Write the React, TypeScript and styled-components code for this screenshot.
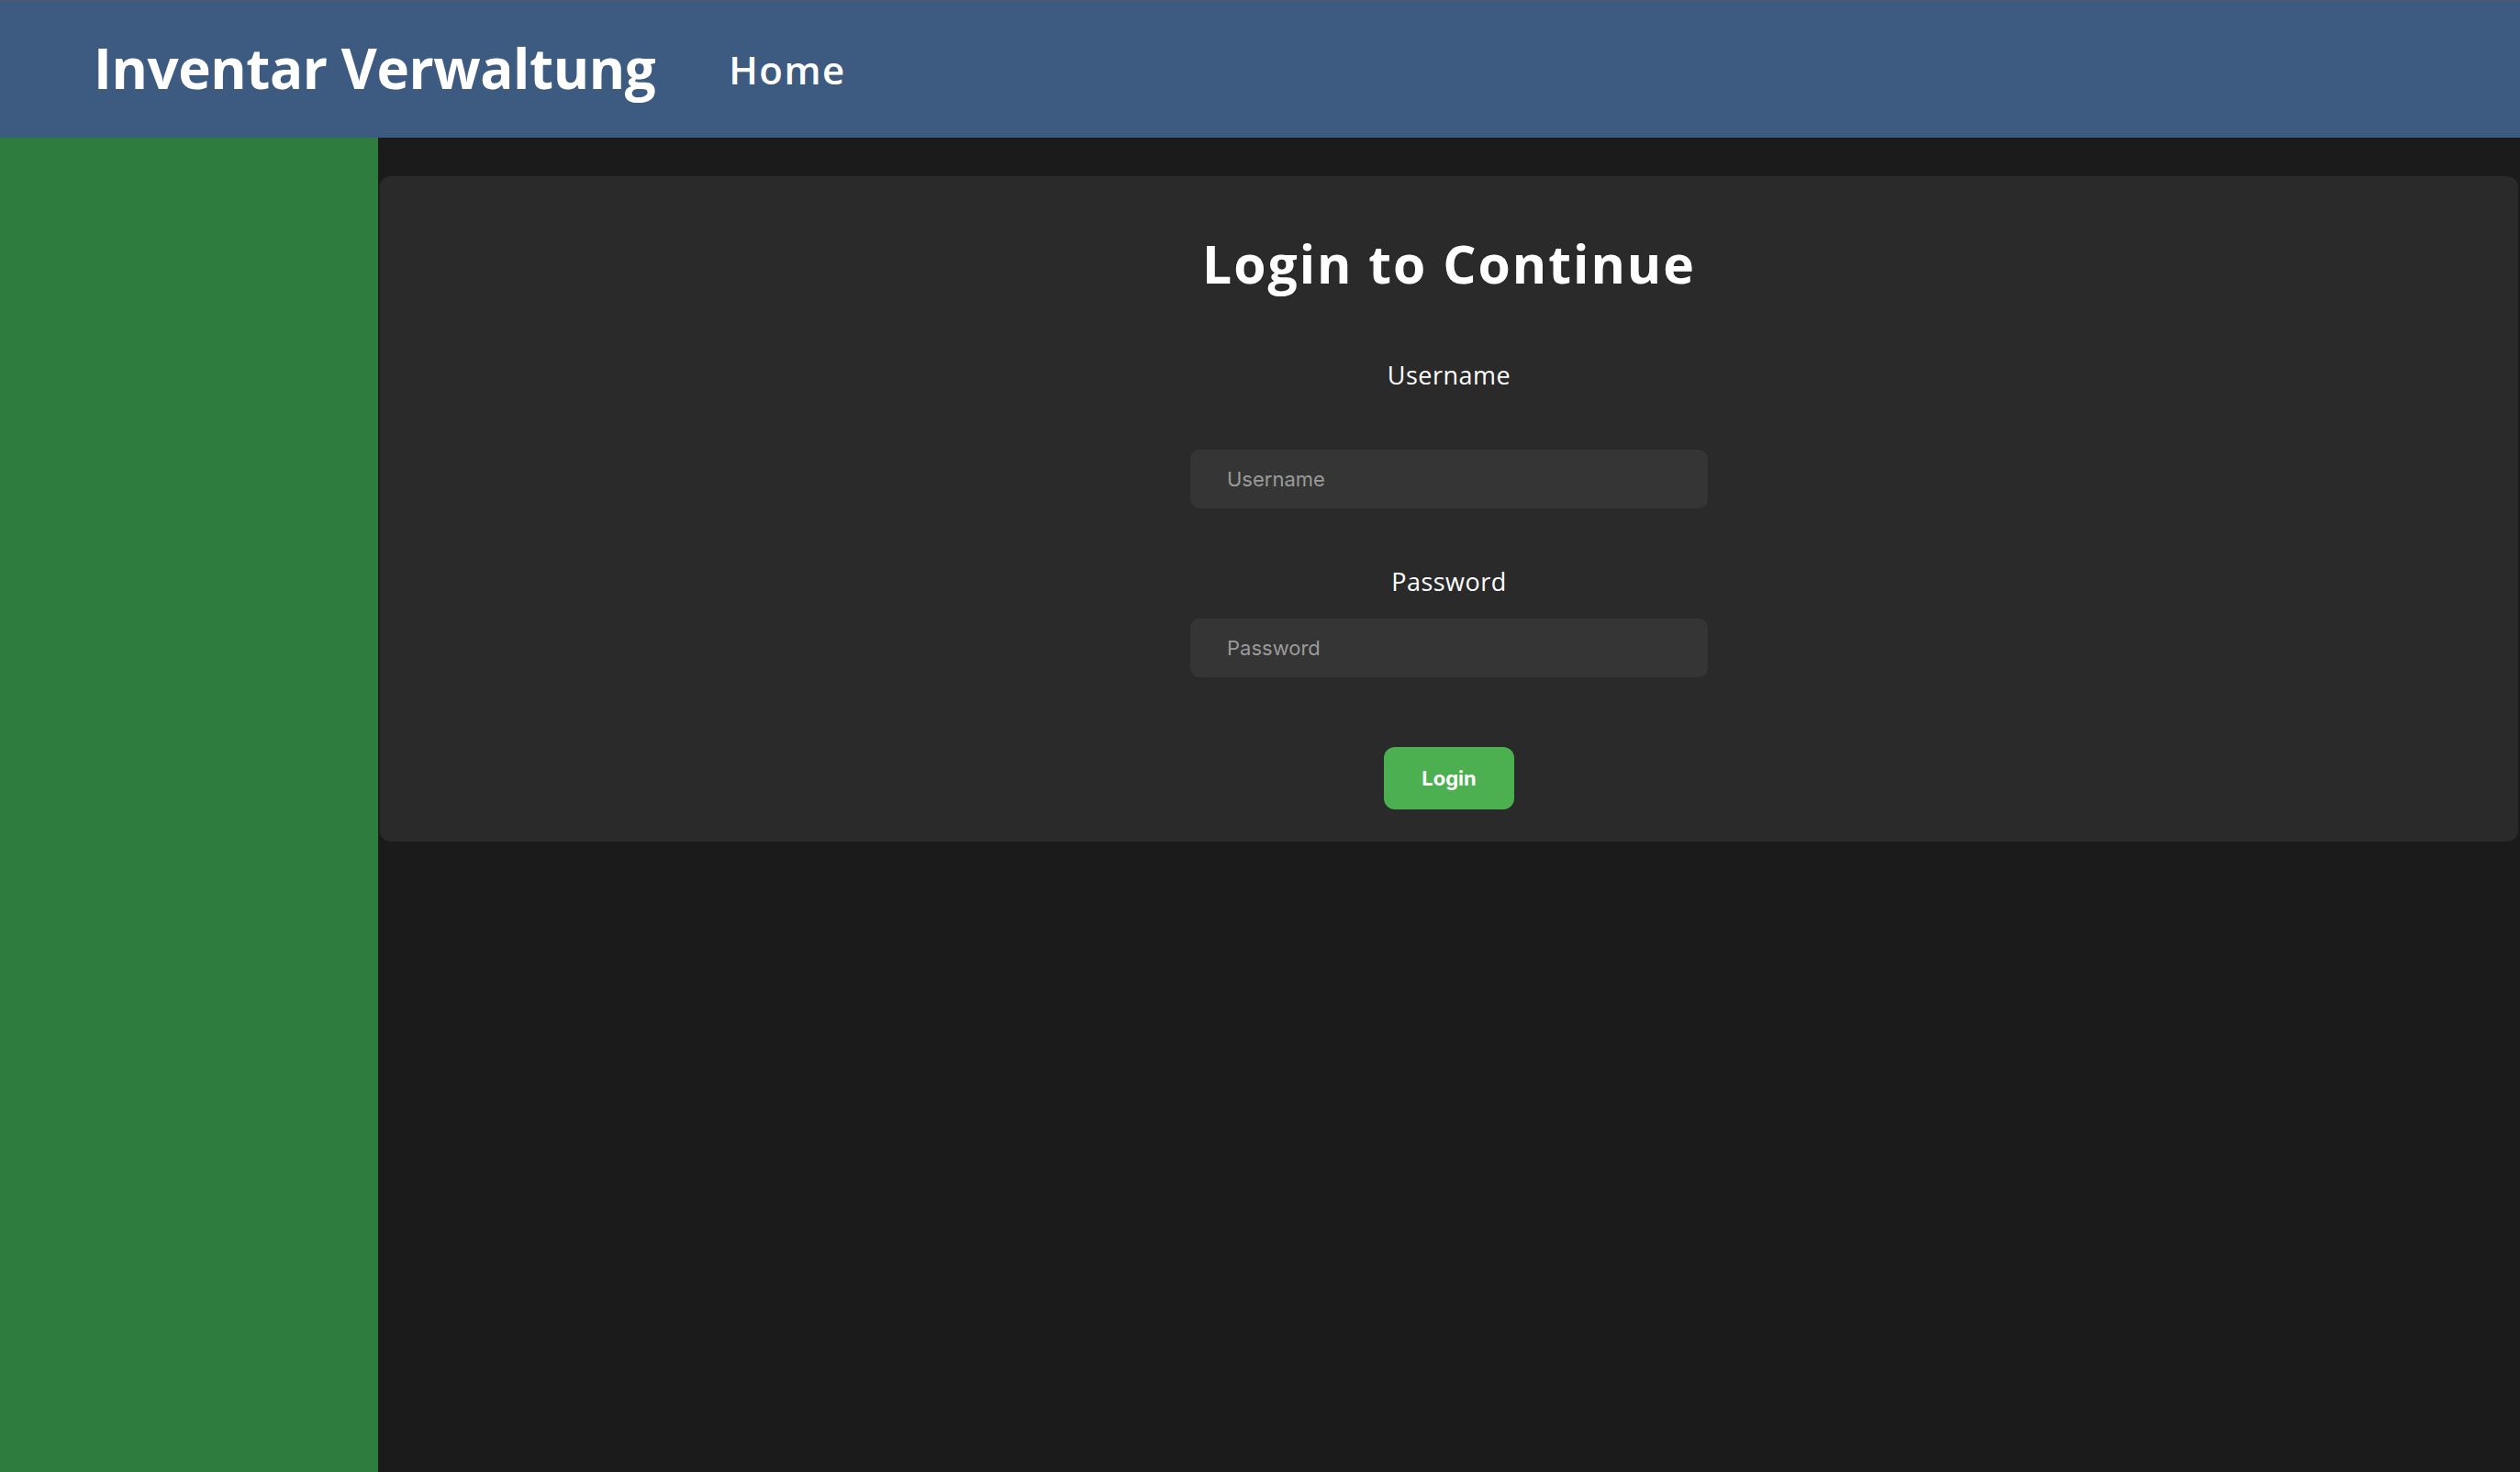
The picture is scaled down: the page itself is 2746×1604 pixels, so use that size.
import React from "react";
import styled, { createGlobalStyle } from "styled-components";

const GlobalStyle = createGlobalStyle`
  html, body {
    margin: 0;
    padding: 0;
    background: #1b1b1b;
    font-family: "Open Sans", "Noto Sans", sans-serif;
  }
  * { box-sizing: border-box; }
`;

const Page = styled.div`
  display: flex;
  flex-direction: column;
  min-height: 100vh;
`;

const Header = styled.header`
  height: 150px;
  background: #3d5a80;
  border-top: 1px solid #5b5464;
  display: flex;
  align-items: center;
  padding-left: 102px;
  gap: 80px;
`;

const Brand = styled.div`
  color: #ffffff;
  font-family: "Open Sans", sans-serif;
  font-weight: 700;
  font-size: 60px;
  line-height: 1;
  padding-bottom: 4px;
  letter-spacing: -0.4px;
`;

const NavLink = styled.a`
  color: #ffffff;
  font-family: "Open Sans", sans-serif;
  font-weight: 600;
  font-size: 42px;
  line-height: 1;
  letter-spacing: 1.5px;
  text-decoration: none;
`;

const Body = styled.div`
  flex: 1;
  display: flex;
`;

const Sidebar = styled.aside`
  width: 412px;
  flex-shrink: 0;
  background: #2e7d3e;
`;

const Main = styled.main`
  flex: 1;
  background: #1b1b1b;
  padding: 42px 2px 0 2px;
`;

const Card = styled.section`
  background: #2a2a2a;
  border-radius: 12px;
  box-shadow: -1px 0 0 #232323;
  padding: 67px 0 35px;
  display: flex;
  flex-direction: column;
  align-items: center;
`;

const Title = styled.h1`
  margin: 0;
  color: #ffffff;
  font-family: "Open Sans", sans-serif;
  font-weight: 700;
  font-size: 57px;
  line-height: 1;
  letter-spacing: 2px;
`;

const Label = styled.label<{ $top: number; $bottom: number }>`
  display: block;
  color: #ffffff;
  font-family: "Open Sans", sans-serif;
  font-weight: 400;
  font-size: 27px;
  line-height: 1;
  letter-spacing: 0.5px;
  margin-top: ${(p) => p.$top}px;
  margin-bottom: ${(p) => p.$bottom}px;
`;

const Input = styled.input`
  width: 564px;
  height: 64px;
  border: none;
  outline: none;
  border-radius: 10px;
  background: #353535;
  color: #ffffff;
  padding: 0 40px;
  font-family: "Inter", sans-serif;
  font-size: 22px;
  &::placeholder {
    color: #9a9a9a;
  }
`;

const Button = styled.button`
  margin-top: 76px;
  height: 68px;
  width: 142px;
  border: none;
  border-radius: 12px;
  background: #4caf50;
  color: #ffffff;
  font-family: "Inter", sans-serif;
  font-weight: 700;
  font-size: 22px;
  cursor: pointer;
`;

export default function App() {
  return (
    <>
      <GlobalStyle />
      <Page>
        <Header>
          <Brand>Inventar Verwaltung</Brand>
          <NavLink href="#">Home</NavLink>
        </Header>
        <Body>
          <Sidebar />
          <Main>
            <Card>
              <Title>Login to Continue</Title>
              <Label $top={79} $bottom={68}>Username</Label>
              <Input placeholder="Username" />
              <Label $top={66} $bottom={27}>Password</Label>
              <Input type="password" placeholder="Password" />
              <Button>Login</Button>
            </Card>
          </Main>
        </Body>
      </Page>
    </>
  );
}
